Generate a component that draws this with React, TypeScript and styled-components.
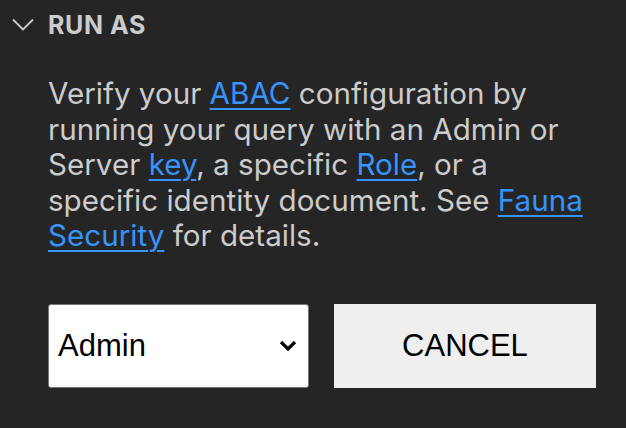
import React from "react";
import styled, { createGlobalStyle } from "styled-components";

const Global = createGlobalStyle`
  html, body { margin: 0; padding: 0; background: #252526; }
  body { width: 626px; height: 428px; overflow: hidden; }
`;

const Panel = styled.div`
  width: 626px;
  height: 428px;
  background: #252526;
  color: #cccccc;
  font-family: Inter, "Noto Sans", sans-serif;
  display: flex;
  flex-direction: column;
`;

const Header = styled.div`
  display: flex;
  align-items: center;
  height: 50px;
  padding-left: 12px;
  gap: 14px;
  color: #cccccc;
  font-family: Inter, sans-serif;
  font-weight: 700;
  font-size: 25px;
  letter-spacing: 0.6px;
`;

const Content = styled.div`
  padding: 26px 30px 0 48px;
  display: flex;
  flex-direction: column;
  gap: 50px;
`;

const Text = styled.p`
  margin: 0;
  font-size: 29.6px;
  line-height: 35.5px;
  color: #cccccc;
`;

const Link = styled.a`
  color: #3794ff;
  text-decoration: underline;
  text-decoration-thickness: 2px;
  text-underline-offset: 4px;
`;

const Row = styled.div`
  display: flex;
  gap: 25px;
`;

const SelectWrap = styled.div`
  position: relative;
  width: 261px;
  height: 84px;
`;

const Select = styled.select`
  appearance: none;
  width: 100%;
  height: 100%;
  box-sizing: border-box;
  border: 1px solid #767676;
  border-radius: 3px;
  background: #ffffff;
  color: #000000;
  font-family: "Liberation Sans", Arial, sans-serif;
  font-size: 31px;
  padding: 0 0 0 9px;
  outline: none;
`;

const Arrow = styled.svg`
  position: absolute;
  right: 12px;
  top: 36px;
  pointer-events: none;
`;

const Button = styled.button`
  width: 262px;
  height: 84px;
  border: none;
  background: #efefef;
  color: #000000;
  font-family: "Liberation Sans", Arial, sans-serif;
  font-size: 31px;
  padding: 0;
`;

export default function App() {
  return (
    <>
      <Global />
      <Panel>
        <Header>
          <svg width="22" height="14" viewBox="0 0 22 14">
            <path d="M1 1.5 L11 11.5 L21 1.5" fill="none" stroke="#cccccc" strokeWidth="1.8" />
          </svg>
          <span>RUN AS</span>
        </Header>
        <Content>
          <Text>
            Verify your <Link href="#">ABAC</Link> configuration by running your query with an Admin or
            Server <Link href="#">key</Link>, a specific <Link href="#">Role</Link>, or a specific identity
            document. See <Link href="#">Fauna Security</Link> for details.
          </Text>
          <Row>
            <SelectWrap>
              <Select defaultValue="Admin">
                <option>Admin</option>
                <option>Server</option>
              </Select>
              <Arrow width="18" height="11" viewBox="0 0 18 11">
                <path d="M2 2 L9 9 L16 2" fill="none" stroke="#000" strokeWidth="3.2" />
              </Arrow>
            </SelectWrap>
            <Button>CANCEL</Button>
          </Row>
        </Content>
      </Panel>
    </>
  );
}
